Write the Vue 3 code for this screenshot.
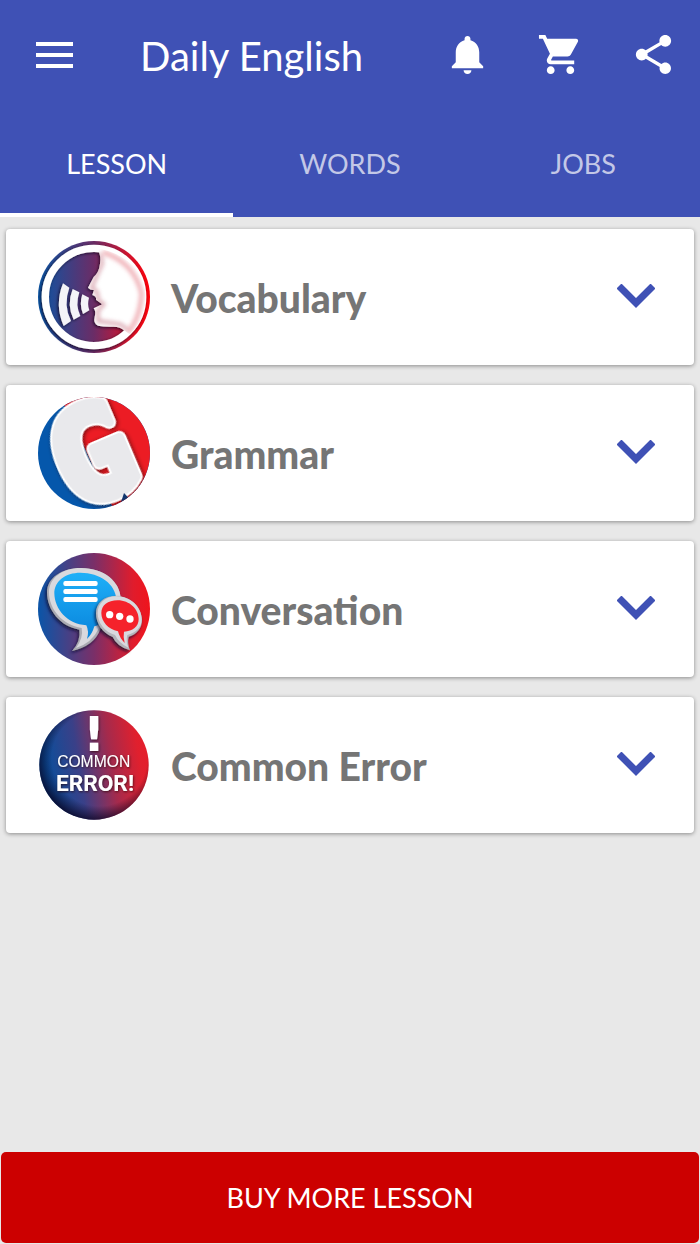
<template>
  <div class="page">
    <header class="app-header">
      <div class="toolbar">
        <button class="icon-button" aria-label="Menu">
          <svg class="menu-icon" viewBox="0 0 37 26">
            <path d="M0 0h37v4H0zM0 11h37v4H0zM0 22h37v4H0z" />
          </svg>
        </button>
        <h1>Daily English</h1>
        <div class="actions">
          <button v-for="action in actions" :key="action.label" class="icon-button" :aria-label="action.label">
            <svg class="action-icon" viewBox="0 0 24 24">
              <path :d="action.path" />
            </svg>
          </button>
        </div>
      </div>
      <nav class="tabs">
        <button
          v-for="tab in tabs"
          :key="tab"
          class="tab"
          :class="{ active: tab === activeTab }"
          @click="activeTab = tab"
        >
          {{ tab }}
        </button>
      </nav>
    </header>

    <main class="lessons">
      <button
        v-for="lesson in lessons"
        :key="lesson.id"
        class="card"
        :aria-expanded="openLesson === lesson.id"
        @click="toggleLesson(lesson.id)"
      >
        <svg v-if="lesson.id === 'vocabulary'" class="lesson-icon" viewBox="23 18 336 336" aria-hidden="true">
          <defs>
            <linearGradient id="voc-bg" x1="0" x2="1" y1="0" y2="0">
              <stop offset="0" stop-color="#0a55a5" />
              <stop offset="0.5" stop-color="#6b2c66" />
              <stop offset="0.8" stop-color="#d0142f" />
              <stop offset="1" stop-color="#ff0008" />
            </linearGradient>
            <filter id="voc-shadow" x="-20%" y="-20%" width="140%" height="140%">
              <feDropShadow dx="-3" dy="3" stdDeviation="4" flood-color="#10051c" flood-opacity="0.8" />
            </filter>
            <filter id="voc-soft" x="-20%" y="-20%" width="140%" height="140%">
              <feGaussianBlur stdDeviation="7" />
            </filter>
            <clipPath id="voc-face"><path :d="facePath" /></clipPath>
          </defs>
          <circle cx="191" cy="186" r="168" fill="url(#voc-bg)" />
          <g filter="url(#voc-shadow)">
            <circle cx="191" cy="186" r="146" fill="none" stroke="#fff" stroke-width="22" />
            <path :d="facePath" fill="#fff" />
          </g>
          <g clip-path="url(#voc-face)">
            <path
              d="M210 55L216 85 200 120 184 158 200 170 204 196 220 208 202 228 204 258 270 268 292 284"
              fill="none" stroke="#c06a7c" stroke-width="10" opacity="0.6" filter="url(#voc-soft)"
            />
            <path
              d="M218 52Q310 80 334 175Q330 250 292 292"
              fill="none" stroke="#e0606c" stroke-width="13" opacity="0.5" filter="url(#voc-soft)"
            />
          </g>
          <g fill="#f4f4f8" filter="url(#voc-shadow)">
            <path d="M98 145L117 158Q98 210 122 258L100 273Q72 210 98 145Z" />
            <path d="M127 162L147 172Q134 210 150 243L130 254Q108 210 127 162Z" />
            <path d="M156 178L176 188Q170 208 177 226L158 237Q146 208 156 178Z" />
          </g>
        </svg>

        <svg v-else-if="lesson.id === 'grammar'" class="lesson-icon" viewBox="23 18 336 336" aria-hidden="true">
          <defs>
            <clipPath id="gra-clip"><circle cx="191" cy="186" r="168" /></clipPath>
            <filter id="gra-shadow" x="-20%" y="-20%" width="140%" height="140%">
              <feDropShadow dx="3" dy="4" stdDeviation="6" flood-color="#300" flood-opacity="0.7" />
            </filter>
          </defs>
          <g clip-path="url(#gra-clip)">
            <path d="M23 18H359V354H23Z" fill="#0557ab" />
            <path d="M90 18H359V354H250Z" fill="#ec1c24" />
            <g transform="rotate(-23 185 190)" filter="url(#gra-shadow)">
              <text class="grammar-letter grammar-rim" x="185" y="325" text-anchor="middle">G</text>
              <text class="grammar-letter grammar-face" x="185" y="325" text-anchor="middle">G</text>
            </g>
            <path d="M270 340L281 306L300 326V354H270Z" fill="#12366e" />
          </g>
        </svg>

        <svg v-else-if="lesson.id === 'conversation'" class="lesson-icon" viewBox="23 21 336 336" aria-hidden="true">
          <defs>
            <linearGradient id="con-bg" x1="0" x2="1" y1="0" y2="0">
              <stop offset="0" stop-color="#0a55a8" />
              <stop offset="0.5" stop-color="#7a2f68" />
              <stop offset="0.85" stop-color="#e01c2c" />
              <stop offset="1" stop-color="#f0141c" />
            </linearGradient>
            <linearGradient id="con-blue" x1="0" x2="0" y1="0" y2="1">
              <stop offset="0" stop-color="#1fb0f8" />
              <stop offset="1" stop-color="#0884dc" />
            </linearGradient>
            <filter id="con-shadow" x="-20%" y="-20%" width="140%" height="140%">
              <feDropShadow dx="-4" dy="6" stdDeviation="5" flood-color="#0c1030" flood-opacity="0.8" />
            </filter>
          </defs>
          <circle cx="191" cy="189" r="168" fill="url(#con-bg)" />
          <g filter="url(#con-shadow)">
            <path
              d="M152 66C222 66 270 108 271 158C272 205 240 238 210 250Q192 300 125 315Q152 285 147 251C90 242 50 192 50 139C50 95 95 66 152 66Z"
              fill="#a9aab2"
            />
            <path
              d="M152 66C222 66 270 108 271 158C272 203 240 233 205 248Q185 290 137 306Q160 275 154 246C96 237 56 190 56 139C56 97 95 66 152 66Z"
              fill="#d9d9de"
            />
          </g>
          <path
            d="M150 80C210 80 256 115 258 160C258 208 225 232 192 241Q186 264 170 279Q177 257 168 238C110 234 73 190 72 142C72 105 105 80 150 80Z"
            fill="url(#con-blue)"
          />
          <g fill="#fff">
            <rect x="99" y="105" width="103" height="15" rx="6" />
            <rect x="99" y="129" width="103" height="15" rx="6" />
            <rect x="99" y="153" width="103" height="15" rx="6" />
          </g>
          <g filter="url(#con-shadow)">
            <path
              d="M256 150C302 150 335 185 335 222C335 248 318 266 295 272Q290 290 299 313Q260 302 247 273C217 262 197 232 197 202C197 172 220 150 256 150Z"
              fill="#b3b4ba"
            />
            <path
              d="M258 151C302 151 334 185 334 220C334 245 316 261 291 267Q286 286 294 305Q266 292 254 267C223 258 202 230 202 201C202 172 225 151 258 151Z"
              fill="#d9d9de"
            />
          </g>
          <path
            d="M262 163C298 163 325 190 325 219C325 243 307 255 281 257Q278 272 283 291Q268 276 263 256C234 250 213 227 213 201C213 178 232 163 262 163Z"
            fill="#f5222b"
          />
          <g fill="#fff">
            <circle cx="238" cy="206" r="11" />
            <circle cx="268" cy="211" r="11" />
            <circle cx="299" cy="219" r="11" />
          </g>
        </svg>

        <svg v-else class="lesson-icon" viewBox="23 23 336 336" aria-hidden="true">
          <defs>
            <linearGradient id="err-bg" x1="0" x2="1" y1="0.15" y2="0">
              <stop offset="0" stop-color="#0a4f9c" />
              <stop offset="0.3" stop-color="#3a4088" />
              <stop offset="0.6" stop-color="#a52a4c" />
              <stop offset="0.85" stop-color="#e0202e" />
              <stop offset="1" stop-color="#e81c28" />
            </linearGradient>
            <radialGradient id="err-shade" cx="0.55" cy="0.44" r="0.58">
              <stop offset="0.75" stop-color="#08001c" stop-opacity="0" />
              <stop offset="1" stop-color="#08001c" stop-opacity="0.8" />
            </radialGradient>
            <filter id="err-shadow" x="-20%" y="-20%" width="140%" height="140%">
              <feDropShadow dx="2" dy="3" stdDeviation="3" flood-color="#200" flood-opacity="0.7" />
            </filter>
          </defs>
          <circle cx="191" cy="191" r="164" fill="url(#err-bg)" />
          <circle cx="191" cy="191" r="164" fill="url(#err-shade)" />
          <g fill="#fff" text-anchor="middle" filter="url(#err-shadow)">
            <text class="error-mark" x="191" y="148">!</text>
            <text class="error-small" x="190" y="196">COMMON</text>
            <text class="error-large" x="194" y="268">ERROR!</text>
          </g>
        </svg>

        <span class="lesson-title">{{ lesson.title }}</span>
        <svg class="chevron" :class="{ open: openLesson === lesson.id }" viewBox="0 0 38 26">
          <path d="M2 2L19 19L36 2" />
        </svg>
      </button>
    </main>

    <button class="buy-button">BUY MORE LESSON</button>
  </div>
</template>

<script setup>
import { ref } from 'vue';

const tabs = ['LESSON', 'WORDS', 'JOBS'];
const activeTab = ref('LESSON');
const openLesson = ref(null);

const lessons = [
  { id: 'vocabulary', title: 'Vocabulary' },
  { id: 'grammar', title: 'Grammar' },
  { id: 'conversation', title: 'Conversation' },
  { id: 'error', title: 'Common Error' }
];

const actions = [
  {
    label: 'Notifications',
    path: 'M12 22c1.1 0 2-.9 2-2h-4c0 1.1.89 2 2 2zm6-6v-5c0-3.07-1.64-5.64-4.5-6.32V4c0-.83-.67-1.5-1.5-1.5s-1.5.67-1.5 1.5v.68C7.63 5.36 6 7.92 6 11v5l-2 2v1h16v-1l-2-2z'
  },
  {
    label: 'Cart',
    path: 'M7 18c-1.1 0-1.99.9-1.99 2S5.9 22 7 22s2-.9 2-2-.9-2-2-2zM1 2v2h2l3.6 7.59-1.35 2.45c-.16.28-.25.61-.25.96 0 1.1.9 2 2 2h12v-2H7.42c-.14 0-.25-.11-.25-.25l.03-.12.9-1.63h7.45c.75 0 1.41-.41 1.75-1.03l3.58-6.49c.08-.14.12-.31.12-.48 0-.55-.45-1-1-1H5.21l-.94-2H1zm16 16c-1.1 0-1.99.9-1.99 2s.89 2 1.99 2 2-.9 2-2-.9-2-2-2z'
  },
  {
    label: 'Share',
    path: 'M18 16.08c-.76 0-1.44.3-1.96.77L8.91 12.7c.05-.23.09-.46.09-.7s-.04-.47-.09-.7l7.05-4.11c.54.5 1.25.81 2.04.81 1.66 0 3-1.34 3-3s-1.34-3-3-3-3 1.34-3 3c0 .24.04.47.09.7L8.04 9.81C7.5 9.31 6.79 9 6 9c-1.66 0-3 1.34-3 3s1.34 3 3 3c.79 0 1.5-.31 2.04-.81l7.12 4.16c-.05.21-.08.43-.08.65 0 1.61 1.31 2.92 2.92 2.92s2.92-1.31 2.92-2.92-1.31-2.92-2.92-2.92z'
  }
];

// profile of the speaking face, closed along the white ring
const facePath =
  'M203 40L208 58Q213 72 207 98Q202 116 190 126L173 158Q180 166 191 165L186 180Q199 184 197 194L216 208L190 220Q198 230 193 246Q188 266 203 272Q220 276 250 275Q270 275 284 288L298 298Q346 250 346 186Q340 70 203 40Z';

function toggleLesson(id) {
  openLesson.value = openLesson.value === id ? null : id;
}
</script>

<style>
body {
  margin: 0;
  background-color: #e8e8e8;
}
</style>

<style scoped>
.page {
  display: flex;
  flex-direction: column;
  min-height: 100vh;
  background-color: #e8e8e8;
  font-family: Lato, "Open Sans", sans-serif;
}

button {
  border: none;
  font-family: inherit;
  cursor: pointer;
}

.app-header {
  background-color: #3f51b5;
  color: white;
}

.toolbar {
  display: flex;
  align-items: center;
  height: 109px;
  padding: 0 23px 0 36px;
}

.icon-button {
  display: flex;
  padding: 0;
  background: none;
  fill: white;
}

.menu-icon {
  width: 37px;
  height: 26px;
}

.action-icon {
  width: 47px;
  height: 47px;
}

h1 {
  flex: 1;
  margin: 0 0 0 67px;
  padding-top: 2px;
  font-size: 40px;
  font-weight: 400;
}

.actions {
  display: flex;
  gap: 46px;
}

.tabs {
  display: flex;
  height: 108px;
}

.tab {
  flex: 1;
  padding: 4px 0 0;
  border-bottom: 4px solid transparent;
  background: none;
  color: rgba(255, 255, 255, 0.7);
  font-size: 27px;
}

.tab.active {
  border-bottom-color: white;
  color: white;
}

.lessons {
  display: flex;
  flex: 1;
  flex-direction: column;
  gap: 20px;
  padding: 12px 6px;
}

.card {
  display: flex;
  align-items: center;
  height: 136px;
  padding: 0 39px 0 32px;
  border-radius: 4px;
  background-color: white;
  box-shadow: 0 1px 4px rgba(0, 0, 0, 0.4);
  color: #757575;
  text-align: left;
}

.lesson-icon {
  width: 112px;
  height: 112px;
}

.lesson-title {
  flex: 1;
  padding: 2px 0 0 21px;
  font-size: 39px;
  font-weight: 900;
}

.chevron {
  width: 38px;
  height: 26px;
  fill: none;
  stroke: #3f51b5;
  stroke-width: 7;
}

.chevron.open {
  transform: rotate(180deg);
}

.buy-button {
  height: 91px;
  margin: 0 1px 1px;
  border-radius: 5px;
  background-color: #cc0000;
  color: white;
  font-size: 27px;
}

.grammar-letter {
  font-family: "DejaVu Sans Mono", monospace;
  font-size: 380px;
  font-weight: 700;
  stroke-linejoin: round;
}

.grammar-rim {
  fill: white;
  stroke: white;
  stroke-width: 40px;
}

.grammar-face {
  fill: #e9e9ec;
  stroke: #e9e9ec;
  stroke-width: 28px;
}

.error-mark {
  font-family: "DejaVu Sans", sans-serif;
  font-size: 142px;
  font-weight: 700;
}

.error-small {
  font-family: "Liberation Sans", sans-serif;
  font-size: 47px;
}

.error-large {
  font-family: Roboto, sans-serif;
  font-size: 68px;
  font-weight: 700;
}
</style>
